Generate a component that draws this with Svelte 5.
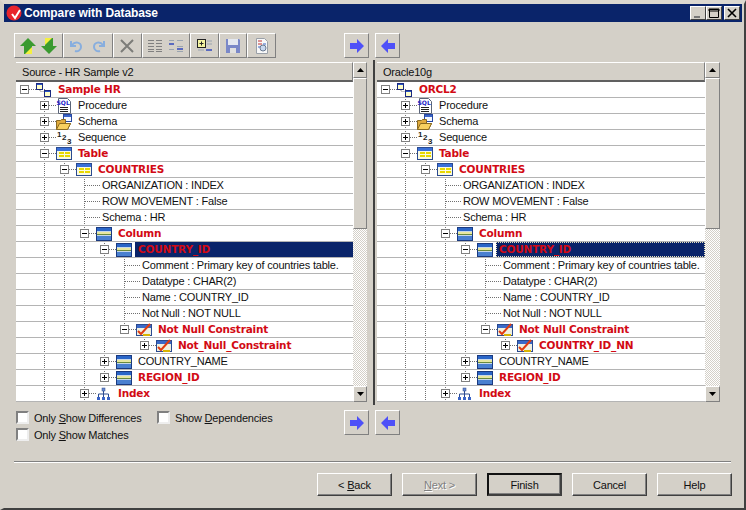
<script>
  const rowsBase = (rootName, nn) => [
    { d: 0, kind: 'minus', icon: 'root', label: rootName, red: true },
    { d: 1, kind: 'plus', icon: 'proc', label: 'Procedure' },
    { d: 1, kind: 'plus', icon: 'schema', label: 'Schema' },
    { d: 1, kind: 'plus', icon: 'seq', label: 'Sequence' },
    { d: 1, kind: 'minus', icon: 'table', label: 'Table', red: true },
    { d: 2, kind: 'minus', icon: 'table', label: 'COUNTRIES', red: true },
    { d: 3, kind: 'leaf', label: 'ORGANIZATION : INDEX' },
    { d: 3, kind: 'leaf', label: 'ROW MOVEMENT : False' },
    { d: 3, kind: 'leaf', label: 'Schema : HR' },
    { d: 3, kind: 'minus', icon: 'column', label: 'Column', red: true },
    { d: 4, kind: 'minus', icon: 'column', label: 'COUNTRY_ID', red: true, selected: true },
    { d: 5, kind: 'leaf', label: 'Comment : Primary key of countries table.' },
    { d: 5, kind: 'leaf', label: 'Datatype : CHAR(2)' },
    { d: 5, kind: 'leaf', label: 'Name : COUNTRY_ID' },
    { d: 5, kind: 'leaf', label: 'Not Null : NOT NULL' },
    { d: 5, kind: 'minus', icon: 'check', label: 'Not Null Constraint', red: true },
    { d: 6, kind: 'plus', icon: 'check', label: nn, red: true },
    { d: 4, kind: 'plus', icon: 'column', label: 'COUNTRY_NAME' },
    { d: 4, kind: 'plus', icon: 'column', label: 'REGION_ID', red: true },
    { d: 3, kind: 'plus', icon: 'index', label: 'Index', red: true }
  ];

  const panels = [
    { title: 'Source - HR Sample v2', rows: rowsBase('Sample HR', 'Not_Null_Constraint') },
    { title: 'Oracle10g', rows: rowsBase('ORCL2', 'COUNTRY_ID_NN') }
  ];

  // vertical tree guides: x inside the tree, first row index, last row index (center)
  const guides = [
    { x: 28, a: 0, b: 20 },
    { x: 48, a: 4, b: 20 },
    { x: 68, a: 5, b: 20 },
    { x: 88, a: 9, b: 18 },
    { x: 108, a: 10, b: 15 },
    { x: 128, a: 15, b: 16 }
  ];
  const cy = (i) => 7 + i * 16;
</script>

{#snippet icon(name)}
  {#if name === 'root'}
    <svg class="ico" viewBox="0 0 16 16">
      <path d="M4 6v3.500h4" fill="none" stroke="#888" stroke-dasharray="1 1" />
      <rect x="0.500" y="1.500" width="6" height="6" fill="#ffffc8" stroke="#1a2a80" />
      <rect x="8.500" y="8.500" width="6" height="6" fill="#ffffc8" stroke="#1a2a80" />
      <path d="M1 2h5v1H1zM9 9h5v1H9z" fill="#2a56c8" />
    </svg>
  {:else if name === 'proc'}
    <svg class="ico" viewBox="0 0 16 16">
      <path d="M2.500 0.500h9l3 3v12h-12z" fill="#fff" stroke="#5a6478" />
      <text x="0.500" y="7" class="sql">SQL</text>
      <path d="M4 9.500h8M4 11.500h8M4 13.500h8" stroke="#222" />
    </svg>
  {:else if name === 'schema'}
    <svg class="ico" viewBox="0 0 16 16">
      <rect x="7.500" y="0.500" width="8" height="7" fill="#f4f8ff" stroke="#2848a0" />
      <rect x="8" y="1" width="7" height="2" fill="#3a64c8" />
      <path d="M0.500 6.500h4l1 -1h4v4h5l-3 6H0.500z" fill="#e0aa3c" stroke="#8a6a20" />
      <path d="M3.500 9.500h11l-3 6H0.500z" fill="#f8d060" stroke="#8a6a20" />
    </svg>
  {:else if name === 'seq'}
    <svg class="ico" viewBox="0 0 16 16">
      <text x="1" y="7" class="seqt">1</text>
      <text x="6" y="10" class="seqt">2</text>
      <text x="11" y="14" class="seqt">3</text>
    </svg>
  {:else if name === 'table'}
    <svg class="ico" viewBox="0 0 16 16">
      <rect x="0.500" y="1.500" width="15" height="12" fill="#fafae0" stroke="#2a4a90" />
      <rect x="1" y="2" width="14" height="3" fill="#3a70d8" />
      <rect x="3" y="6" width="5" height="2" fill="#e8d800" />
      <rect x="9" y="6" width="5" height="2" fill="#e8d800" />
      <rect x="3" y="9" width="5" height="2" fill="#e8d800" />
      <rect x="9" y="9" width="5" height="2" fill="#e8d800" />
    </svg>
  {:else if name === 'column'}
    <svg class="ico" viewBox="0 0 16 16">
      <rect x="0.500" y="1.500" width="15" height="13" fill="#c8d8e8" stroke="#1a3a80" />
      <rect x="1" y="2" width="14" height="3" fill="#2a66c8" />
      <rect x="1" y="6" width="14" height="2" fill="#e8e8a0" />
      <rect x="1" y="8" width="14" height="1" fill="#6a8a3c" />
      <rect x="1" y="10" width="14" height="4" fill="#4a80d0" />
    </svg>
  {:else if name === 'check'}
    <svg class="ico" viewBox="0 0 16 16">
      <rect x="0.500" y="2.500" width="15" height="11" fill="#f0f0e0" stroke="#2a4a90" />
      <rect x="1" y="3" width="14" height="3" fill="#3a6ac8" />
      <path d="M2 9l3 3 9-10" fill="none" stroke="#e03c10" stroke-width="2" />
      <path d="M7 13h7" stroke="#d8b400" stroke-width="2" />
    </svg>
  {:else if name === 'index'}
    <svg class="ico" viewBox="0 0 16 16">
      <rect x="6" y="2" width="3" height="3" fill="#6a8ad0" stroke="#2a4a90" stroke-width="0.500" />
      <path d="M7.500 5v3M2.500 11V8h10v3M7.500 8v3" fill="none" stroke="#2a4a90" />
      <rect x="1" y="11" width="3" height="3" fill="#3a64c8" />
      <rect x="6" y="11" width="3" height="3" fill="#3a64c8" />
      <rect x="11" y="11" width="3" height="3" fill="#3a64c8" />
    </svg>
  {/if}
{/snippet}

{#snippet bluearrow(dir)}
  <svg class="big" viewBox="0 0 16 14">
    {#if dir === 'r'}
      <path d="M1 4h7V0l7 7-7 7v-4H1z" fill="#4e50f8" />
    {:else}
      <path d="M15 4H8V0L1 7l7 7v-4h7z" fill="#4e50f8" />
    {/if}
  </svg>
{/snippet}

<div class="window">
  <header class="title">
    <svg class="logo" viewBox="0 0 16 16">
      <circle cx="8" cy="8" r="7.500" fill="#e8242c" />
      <path d="M6 9l3 4 5-8" fill="none" stroke="#fff" stroke-width="2" />
    </svg>
    <span class="title-text">Compare with Database</span>
    <div class="caps">
      <span class="cap"><svg viewBox="0 0 14 12"><path d="M3 9h6v2H3z" fill="#777" /></svg></span>
      <span class="cap"><svg viewBox="0 0 14 12"><path d="M2.500 2.500h9v8h-9zM2 2h10v2H2z" fill="none" stroke="#000" /></svg></span>
      <span class="cap gap"><svg viewBox="0 0 14 12"><path d="M3 2l8 8M11 2l-8 8" stroke="#000" stroke-width="1.600" /></svg></span>
    </div>
  </header>

  <div class="top">
    <div class="toolbar">
      <div class="tgroup w48">
        <svg class="tb" viewBox="0 0 16 16"><path d="M8 0l8 8h-4v8H4V8H0z" fill="#3a9a30" /><path d="M12 9v7H5z" fill="#f4f040" /></svg>
        <svg class="tb" viewBox="0 0 16 16"><path d="M8 16l8-8h-4V0H4v8H0z" fill="#3a9a30" /><path d="M4 7V0h7z" fill="#f4f040" /></svg>
      </div>
      <div class="tgroup w49">
        <svg class="tb" viewBox="0 0 16 16"><path d="M2 3v5h5M3 7c3-4 9-3 9 2 0 3-3 5-6 4" fill="none" stroke="#88aede" stroke-width="2" /></svg>
        <svg class="tb" viewBox="0 0 16 16"><path d="M14 3v5H9M13 7c-3-4-9-3-9 2 0 3 3 5 6 4" fill="none" stroke="#88aede" stroke-width="2" /></svg>
      </div>
      <div class="tgroup w28">
        <svg class="tb" viewBox="0 0 16 16"><path d="M2 2l12 12M14 2L2 14" stroke="#7c7c78" stroke-width="2" /></svg>
      </div>
      <div class="tgroup w48">
        <svg class="tb" viewBox="0 0 16 16"><path d="M1 2.500h6M9 2.500h6M1 5.500h6M9 5.500h6M1 8.500h6M9 8.500h6M1 11.500h6M9 11.500h6M1 13.500h6M9 13.500h6" stroke="#808080" /></svg>
        <svg class="tb" viewBox="0 0 16 16"><path d="M1 2.500h5M9 2.500h6M9 8.500h6M1 11.500h5M9 13.500h6" stroke="#9aa4b0" /><path d="M1 5h5v2H1zM9 10h6v2H9z" fill="#5a6ac0" /></svg>
      </div>
      <div class="tgroup w28">
        <svg class="tb" viewBox="0 0 16 16"><rect x="0.500" y="1.500" width="8" height="8" fill="#f4f4a0" stroke="#222" /><path d="M2.500 5.500h4M4.500 3.500v4" stroke="#222" /><path d="M10 3h5M10 6h5M1 12h6" stroke="#9aa4b0" /><path d="M9 11h6v2H9z" fill="#5a6ac0" /></svg>
      </div>
      <div class="tgroup w27">
        <svg class="tb" viewBox="0 0 16 16"><path d="M1 1h13l1 1v13H1z" fill="#7a88c8" /><rect x="3" y="1" width="10" height="6" fill="#e4e8f0" /><rect x="5" y="10" width="6" height="5" fill="#e0e0e0" /></svg>
      </div>
      <div class="tgroup w28">
        <svg class="tb" viewBox="0 0 16 16"><path d="M2.500 0.500h8l3 3v12h-11z" fill="#f8f8f8" stroke="#9aa0a8" /><path d="M4 3h4M4 6h4" stroke="#c03030" /><path d="M9 6h3M4 9h3" stroke="#3a64c8" /><circle cx="9" cy="10" r="3" fill="#c8d8f0" stroke="#6a7a90" /></svg>
      </div>
    </div>
    <div class="arrows">
      <button class="arrow">{@render bluearrow('r')}</button>
      <button class="arrow">{@render bluearrow('l')}</button>
    </div>
  </div>

  <div class="panes">
    {#each panels as p, pi}
      <section class="pane" class:right={pi === 1}>
        <div class="treebox">
          <div class="th">{p.title}</div>
          <div class="tree">
            <svg class="guides">
              {#each guides as g}
                <line x1={g.x + 0.500} x2={g.x + 0.500} y1={cy(g.a)} y2={g.b === 20 ? 320 : cy(g.b)} />
              {/each}
            </svg>
            {#each p.rows as r}
              <div class="row" style="padding-left:{r.kind === 'leaf' ? r.d * 20 - 12 : 4 + r.d * 20}px">
                {#if r.kind === 'leaf'}
                  <span class="dots leafdots"></span>
                {:else}
                  <span class="exp">
                    <span class="h"></span>
                    {#if r.kind === 'plus'}<span class="v"></span>{/if}
                  </span>
                  <span class="dots"></span>
                  {@render icon(r.icon)}
                {/if}
                <span class="label" class:red={r.red} class:sel={r.selected}>{r.label}</span>
              </div>
            {/each}
          </div>
        </div>
        <div class="sb">
          <div class="sbtn"><svg viewBox="0 0 7 4"><path d="M3.500 0L7 4H0z" /></svg></div>
          <div class="thumb"></div>
          <div class="track"></div>
          <div class="sbtn"><svg viewBox="0 0 7 4"><path d="M0 0h7L3.500 4z" /></svg></div>
        </div>
      </section>
      {#if pi === 0}<div class="split"></div>{/if}
    {/each}
  </div>

  <div class="opts">
    <div class="checks">
      <label class="ck w141"><span class="box"></span><span>Only <u>S</u>how Differences</span></label>
      <label class="ck"><span class="box"></span><span>Show <u>D</u>ependencies</span></label>
      <label class="ck w141 full"><span class="box"></span><span>Only <u>S</u>how Matches</span></label>
    </div>
    <div class="arrows low">
      <button class="arrow">{@render bluearrow('r')}</button>
      <button class="arrow">{@render bluearrow('l')}</button>
    </div>
  </div>

  <hr class="sep" />

  <footer class="foot">
    <button class="btn">&lt; <u>B</u>ack</button>
    <button class="btn off"><u>N</u>ext &gt;</button>
    <button class="btn def">Finish</button>
    <button class="btn">Cancel</button>
    <button class="btn">Help</button>
  </footer>
</div>

<style>
  :global(body) { margin: 0; background: #d4d0c8; }
  .window {
    width: 746px; height: 510px; box-sizing: border-box; background: #d4d0c8; overflow: hidden;
    border: 4px solid #d4d0c8; border-top-color: #dcd8d0; border-bottom: 2px solid #404040;
    border-right: 2px solid #404040; padding-right: 2px; padding-bottom: 2px;
    display: flex; flex-direction: column;
    font: 11px "Liberation Sans", Arial, sans-serif; letter-spacing: -0.2px; color: #111;
  }
  .title { height: 18px; flex: none; background: #0a246a; display: flex; align-items: center; color: #fff; }
  .logo { width: 16px; height: 16px; margin-left: 2px; flex: none; }
  .title-text { font: bold 12px "Liberation Sans", sans-serif; letter-spacing: -0.1px; margin-left: 2px; }
  .caps { margin-left: auto; display: flex; margin-right: 2px; }
  .cap { width: 16px; height: 14px; background: #d4d0c8; display: flex; box-sizing: border-box; border: 1px solid; border-color: #fff #404040 #404040 #fff; }
  .cap svg { width: 14px; height: 12px; }
  .gap { margin-left: 2px; }

  .top { display: flex; height: 25px; margin-top: 11px; flex: none; padding-left: 10px; }
  .toolbar { display: flex; width: 262px; }
  .tgroup { box-sizing: border-box; height: 25px; display: flex; align-items: center; justify-content: space-evenly; border: 1px solid; border-color: #fff #808080 #808080 #fff; }
  .w48 { width: 49px; } .w49 { width: 50px; } .w28 { width: 29px; } .w27 { width: 28px; }
  .tb { width: 16px; height: 16px; }
  .arrows { display: flex; gap: 6px; }
  .top .arrows { margin-left: 68px; }
  .arrow { width: 25px; height: 25px; padding: 0; background: #d4d0c8; border: 1px solid; border-color: #fff #808080 #808080 #fff; display: flex; align-items: center; justify-content: center; }
  .big { width: 16px; height: 14px; }

  .panes { display: flex; height: 340px; margin-top: 4px; flex: none; padding-left: 12px; }
  .pane { display: flex; }
  .treebox { width: 337px; display: flex; flex-direction: column; }
  .pane.right .treebox { width: 328px; }
  .th { height: 20px; box-sizing: border-box; border-bottom: 2px solid #606060; border-right: 1px solid #808080; border-top: 1px solid #fff; padding: 2px 0 0 6px; background: #d4d0c8; line-height: 15px; flex: none; }
  .tree { position: relative; background: #fff; height: 320px; overflow: hidden; }
  .guides { position: absolute; left: 0; top: 0; width: 100%; height: 320px; }
  .guides line { stroke: #707070; stroke-dasharray: 1 1; }
  .row { position: relative; height: 16px; box-sizing: border-box; border-bottom: 1px solid #b4b4b4; display: flex; align-items: center; white-space: nowrap; }
  .exp { width: 9px; height: 9px; box-sizing: border-box; border: 1px solid #808080; background: #fff; position: relative; flex: none; }
  .exp .h { position: absolute; left: 1px; right: 1px; top: 3px; height: 1px; background: #000; }
  .exp .v { position: absolute; top: 1px; bottom: 1px; left: 3px; width: 1px; background: #000; }
  .dots { width: 7px; flex: none; border-top: 1px dotted #707070; box-sizing: border-box; }
  .leafdots { width: 16px; margin-right: 2px; margin-left: 20px; }
  .ico { width: 16px; height: 16px; flex: none; }
  .sql { font: bold 6px "DejaVu Sans", sans-serif; letter-spacing: 0; fill: #1820c8; }
  .seqt { font: bold 8px "Liberation Sans", sans-serif; letter-spacing: 0; fill: #222; }
  .label { margin-left: 6px; padding: 0 2px 0 0; line-height: 15px; background: transparent; }
  .leafdots + .label { margin-left: 0; }
  .red { color: #d20a14; font: bold 10.5px "DejaVu Sans", sans-serif; letter-spacing: -0.2px; line-height: 15px; }
  .sel { background: #0a246a; align-self: stretch; flex: 1; margin-left: 3px; padding-left: 3px; }
  .pane.right .sel { outline: 1px dotted #e8e4c0; outline-offset: -1px; }

  .sb { width: 14px; display: flex; flex-direction: column; flex: none; }
  .pane.right .sb { width: 15px; }
  .sbtn { height: 16px; flex: none; box-sizing: border-box; background: #d4d0c8; border: 1px solid; border-color: #fff #808080 #808080 #fff; display: flex; align-items: center; justify-content: center; }
  .sbtn svg { width: 7px; height: 4px; }
  .thumb { height: 151px; box-sizing: border-box; background: #d4d0c8; border: 1px solid; border-color: #fff #808080 #808080 #fff; flex: none; }
  .track { flex: 1; background: repeating-conic-gradient(#fff 0 25%, #d4d0c8 0 50%) 0 0 / 2px 2px; }

  .split { width: 2px; background: #404040; margin: -2px 2px -3px 6px; flex: none; }

  .opts { display: flex; height: 59px; padding: 9px 0 0 12px; box-sizing: border-box; flex: none; }
  .checks { width: 316px; display: flex; flex-wrap: wrap; align-content: flex-start; row-gap: 4px; }
  .ck { display: flex; align-items: center; height: 13px; gap: 5px; color: #111; }
  .w141 { width: 141px; }
  .full { flex-basis: 100%; }
  .box { width: 13px; height: 13px; box-sizing: border-box; background: #fff; border: 2px solid; border-color: #808080 #eee #eee #808080; flex: none; }
  .low { margin: -1px 0 0 12px; height: 25px; }

  .sep { width: 717px; margin: 0 0 0 10px; height: 2px; border: 0; border-top: 1px solid #808080; border-bottom: 1px solid #fff; flex: none; box-sizing: border-box; }

  .foot { display: flex; justify-content: flex-end; gap: 10px; margin-top: 10px; padding-right: 10px; }
  .btn { width: 75px; height: 23px; padding: 0; background: #d4d0c8; font: 11px "Liberation Sans", sans-serif; letter-spacing: -0.2px; color: #111; box-sizing: border-box; border: 1px solid; border-color: #fff #404040 #404040 #fff; box-shadow: inset -1px -1px 0 #808080; }
  .off { color: #808080; text-shadow: 1px 1px 0 #fff; }
  .def { border: 2px solid #111; border-color: #111 #404040 #404040 #111; }
</style>
